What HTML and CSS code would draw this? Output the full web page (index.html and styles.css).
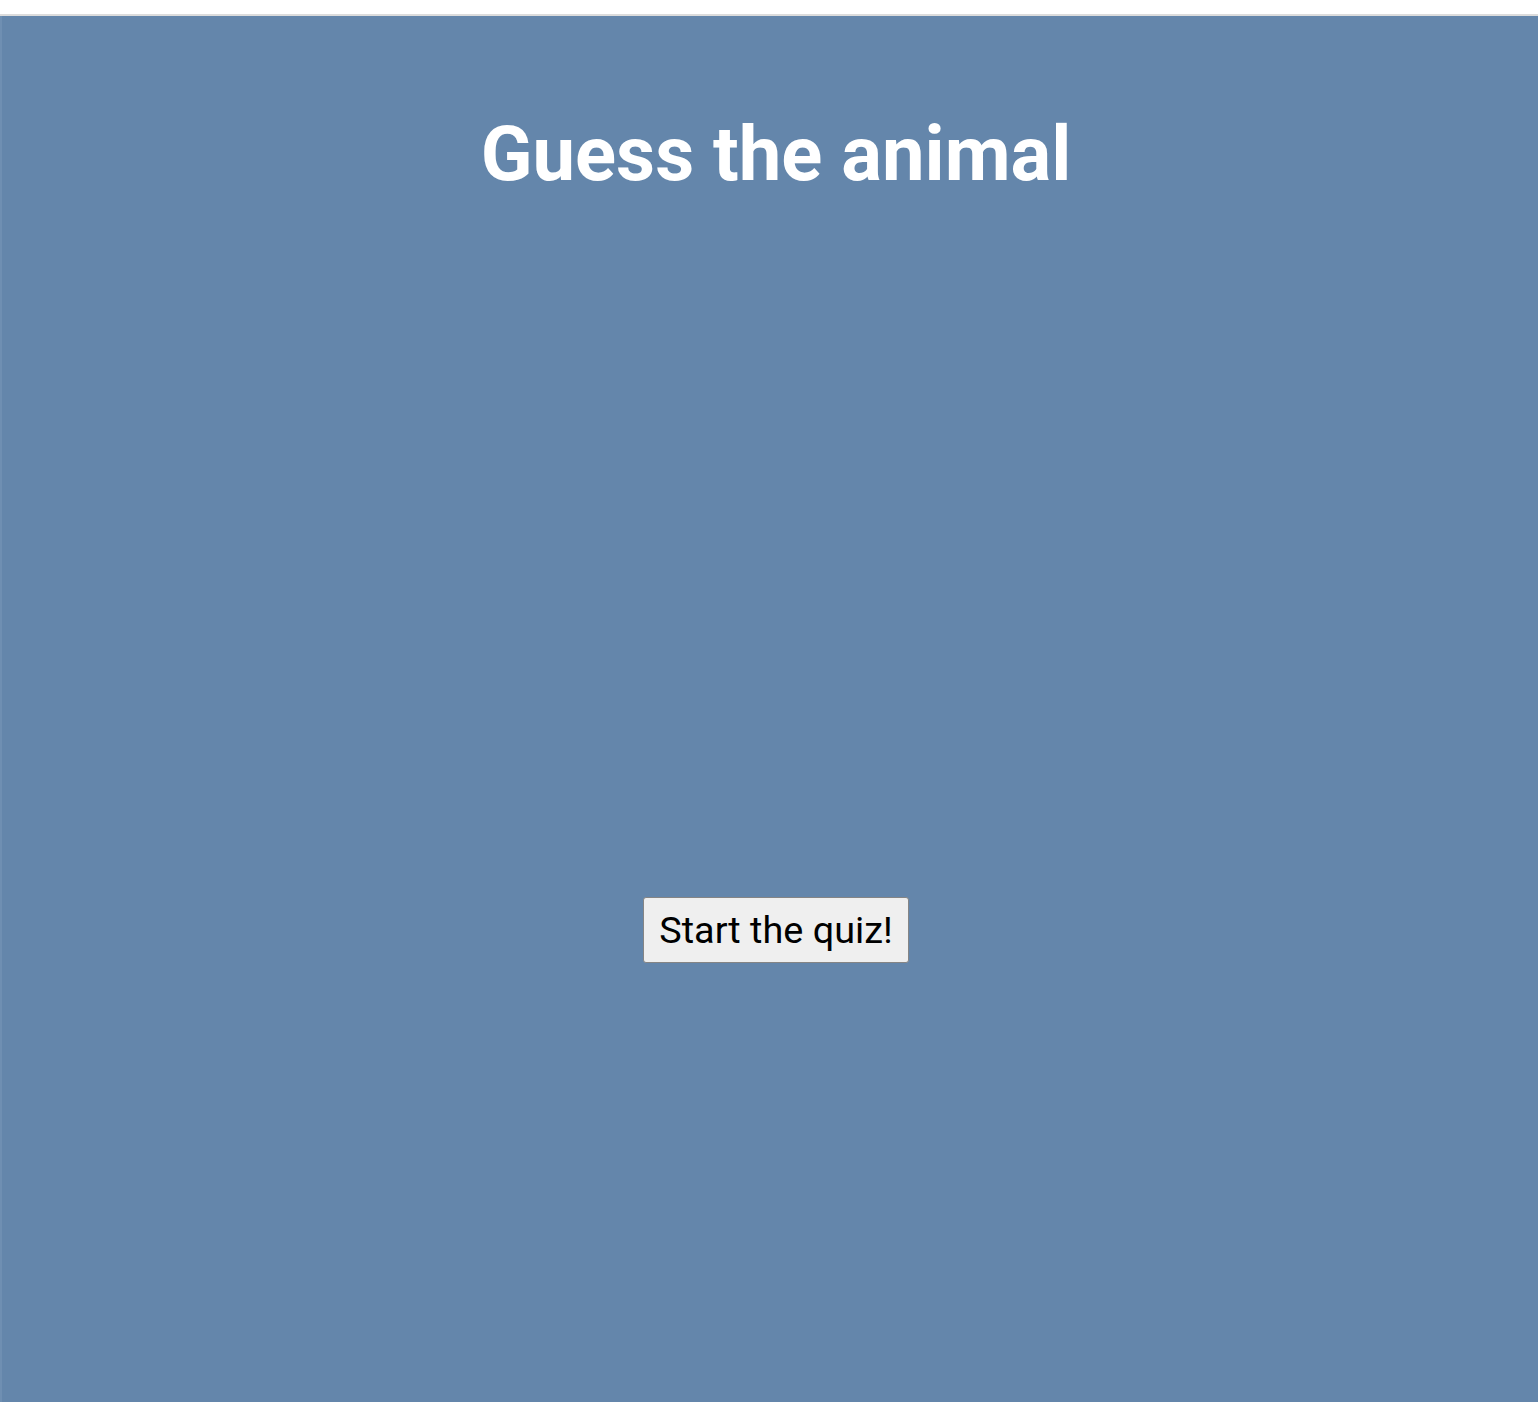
FILE: index.html
```html
<!DOCTYPE html>
<html lang="en">
<head>
<meta charset="utf-8">
<title>Guess the animal</title>
<link rel="stylesheet" href="styles.css">
</head>
<body>
<div class="top-strip"></div>
<main class="stage">
  <h1 class="title">Guess the animal</h1>
  <div class="actions">
    <button class="start-btn" type="button">Start the quiz!</button>
  </div>
</main>
</body>
</html>
```

FILE: styles.css
```css
html, body {
  margin: 0;
  padding: 0;
  background: #ffffff;
}

body {
  font-family: Roboto, "Liberation Sans", Arial, sans-serif;
}

.top-strip {
  height: 14px;
  background: #ffffff;
  border-bottom: 2px solid #dcdcdc;
}

.stage {
  background: #6486ab;
  min-height: 1386px;
  padding: 94px 0 0 12px;
  box-sizing: border-box;
  display: flex;
  flex-direction: column;
  align-items: center;
  border-left: 2px solid #6f8fb2;
}

.title {
  margin: 0;
  color: #ffffff;
  font-size: 76px;
  font-weight: 700;
  line-height: 1.172;
  text-align: center;
}

.actions {
  margin-top: 698px;
  display: flex;
  justify-content: center;
}

.start-btn {
  font-family: Roboto, "Liberation Sans", Arial, sans-serif;
  font-size: 37.8px;
  line-height: 1.172;
  color: #000000;
  background: #efefef;
  border: 1px solid #858585;
  border-radius: 3px;
  padding: 10px 15px;
  margin: 0;
  cursor: pointer;
}
```
